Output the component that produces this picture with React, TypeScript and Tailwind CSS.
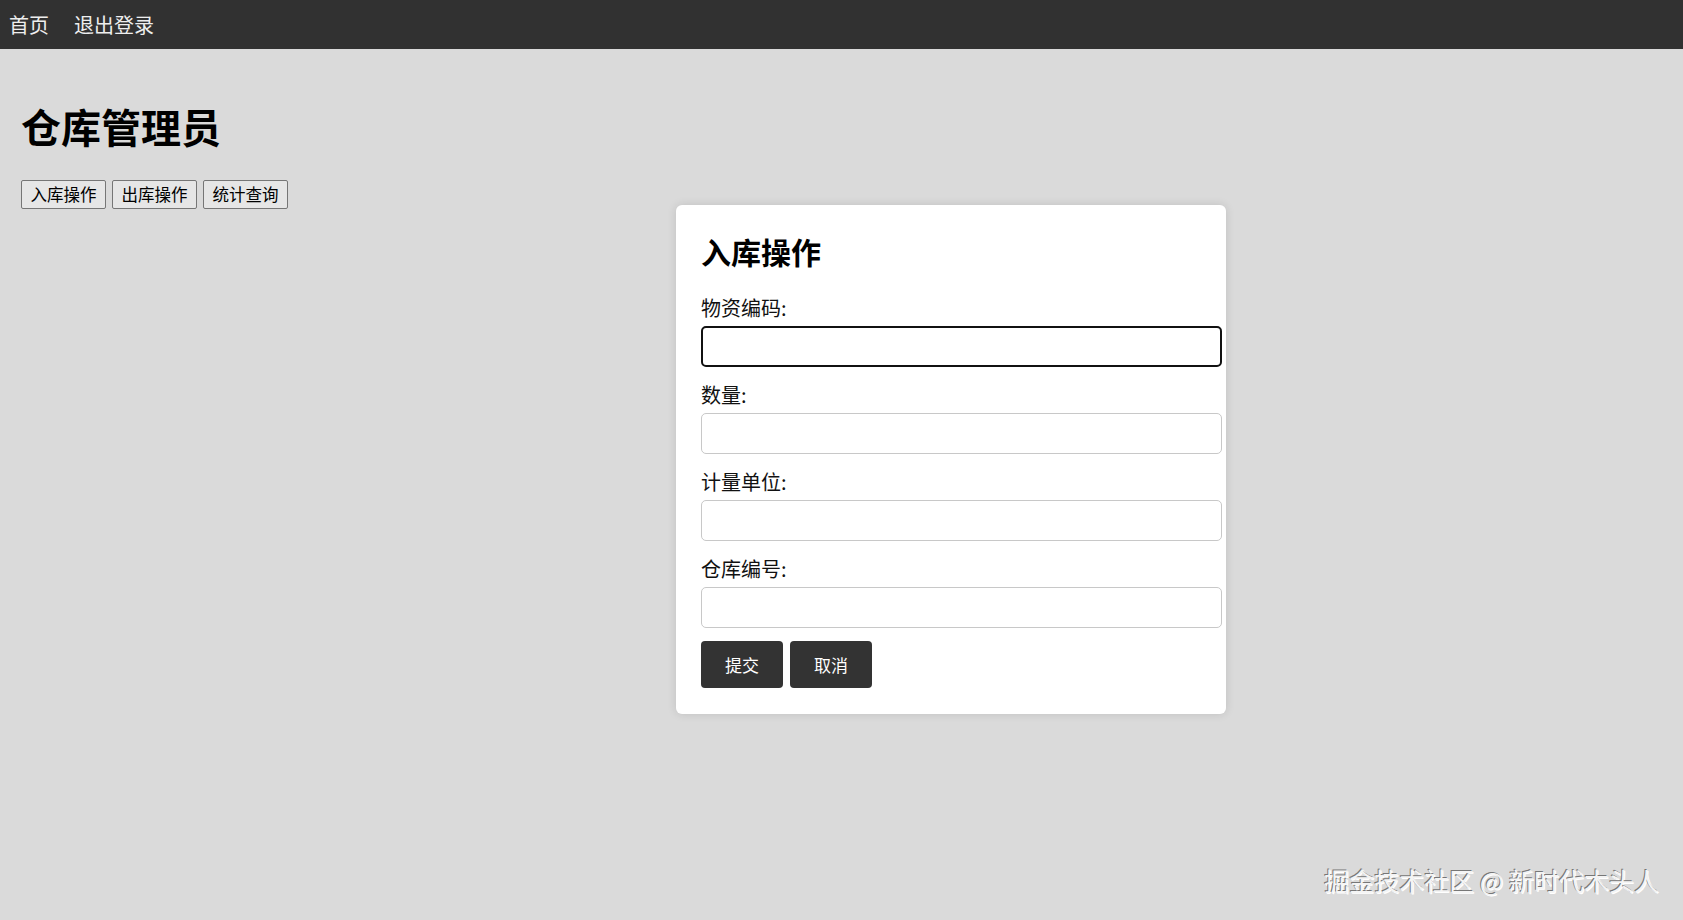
// Warehouse keeper page: top nav, title, action buttons and the stock-in dialog.

import { useState } from "react";

const FONT = "font-['Microsoft_YaHei','Noto_Sans_CJK_SC','Noto_Sans',sans-serif]";

const FIELDS = ["物资编码", "数量", "计量单位", "仓库编号"];

function Field({ label, focused }: { label: string; focused?: boolean }) {
  return (
    <div className="flex flex-col">
      <label className="h-[45px] pt-[15px] text-[20px] leading-[24px] text-[#111]">{label}:</label>
      <input
        type="text"
        className={
          focused
            ? "h-[41px] w-[521px] rounded-[5px] border-2 border-[#111] bg-white px-2 outline-none"
            : "h-[41px] w-[521px] rounded-[5px] border border-[#c8c8c8] bg-white px-2 outline-none"
        }
      />
    </div>
  );
}

export default function App() {
  const [tab, setTab] = useState("入库操作");

  return (
    <div className={`relative min-h-[920px] bg-[#dadada] ${FONT}`}>
      <nav className="flex h-[49px] items-center gap-[25px] bg-[#313131] px-[9px] text-[20px] text-[#eeeeee]">
        <a href="#">首页</a>
        <a href="#">退出登录</a>
      </nav>

      <main className="px-[21px]">
        <h1 className="mt-[53px] text-[40px] font-bold leading-[48px] text-black">仓库管理员</h1>
        <div className="mt-[30px] flex gap-[6px]">
          {["入库操作", "出库操作", "统计查询"].map((t) => (
            <button
              key={t}
              type="button"
              onClick={() => setTab(t)}
              className="h-[29px] w-[85px] rounded-[2px] border border-[#767676] bg-[#e6e6e6] text-[16.5px] leading-none text-black"
            >
              {t}
            </button>
          ))}
        </div>
      </main>

      {tab === "入库操作" && (
        <div className="absolute left-[676px] top-[205px] w-[550px] rounded-[6px] bg-white px-[25px] pb-[26px] pt-[22px] shadow-[0_0_10px_rgba(0,0,0,0.12)]">
          <h2 className="mb-[6px] text-[30px] font-bold leading-[48px] text-black">入库操作</h2>
          <div className="flex flex-col gap-[1px]">
            {FIELDS.map((f, i) => (
              <Field key={f} label={f} focused={i === 0} />
            ))}
          </div>
          <div className="mt-[13px] flex gap-[7px]">
            <button type="button" className="h-[47px] w-[82px] rounded-[4px] bg-[#333333] text-[17px] text-white">
              提交
            </button>
            <button
              type="button"
              onClick={() => setTab("")}
              className="h-[47px] w-[82px] rounded-[4px] bg-[#333333] text-[17px] text-white"
            >
              取消
            </button>
          </div>
        </div>
      )}

      <div className="absolute bottom-[27px] right-[24px] text-[25px] leading-none text-[#f4f4f4] [text-shadow:-1px_-1px_0_#777,1px_1px_0_#fff]">
        掘金技术社区 @ 新时代木头人
      </div>
    </div>
  );
}
